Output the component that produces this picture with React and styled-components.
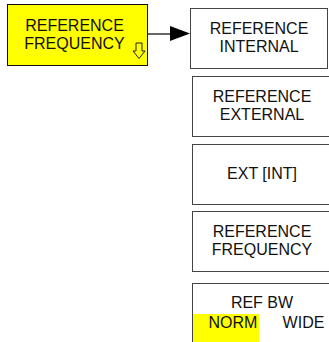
import React from 'react'
import styled, { createGlobalStyle } from 'styled-components'

const Global = createGlobalStyle`
  html, body {
    margin: 0;
    padding: 0;
    background: #fff;
    overflow: hidden;
  }
  body {
    font-family: "Liberation Sans", Arial, sans-serif;
    color: #111;
  }
`

const Page = styled.div`
  display: flex;
  align-items: flex-start;
  width: 329px;
  height: 342px;
  overflow: hidden;
  & > * {
    flex-shrink: 0;
  }
`

const MainKey = styled.div`
  position: relative;
  box-sizing: border-box;
  margin: 4px 0 0 7px;
  width: 141px;
  height: 62px;
  background: #ffff00;
  border: 1px solid #111;
  display: flex;
  flex-direction: column;
  justify-content: center;
  align-items: center;
  font-size: 16px;
  line-height: 18px;
  padding: 0 6px 0 0;
`

const DownArrow = styled.svg`
  position: absolute;
  right: 1px;
  bottom: 5px;
`

const Connector = styled.div`
  display: flex;
  align-items: center;
  margin-top: 26px;
  height: 15px;
`

const Line = styled.div`
  width: 22px;
  height: 2px;
  background: #666;
`

const Column = styled.div`
  display: flex;
  flex-direction: column;
`

const SoftKey = styled.div`
  box-sizing: border-box;
  flex-shrink: 0;
  width: ${p => p.$w || 140}px;
  height: 61px;
  margin-top: ${p => p.$top}px;
  margin-left: ${p => p.$left}px;
  border: 1px solid #444;
  display: flex;
  flex-direction: column;
  justify-content: ${p => (p.$split ? 'flex-start' : 'center')};
  align-items: center;
  font-size: 16px;
  line-height: 18px;
  padding-top: ${p => (p.$split ? '10px' : '0')};
  padding-bottom: ${p => (p.$split ? '0' : '2px')};
  text-align: center;
`

const Options = styled.div`
  align-self: stretch;
  display: flex;
  margin-top: 2px;
  height: 30px;
`

const Option = styled.div`
  width: ${p => p.$w}px;
  background: ${p => (p.$active ? '#ffff00' : 'transparent')};
  padding-left: ${p => p.$pad}px;
  box-sizing: border-box;
  line-height: 17px;
`

export default function App() {
  return (
    <Page>
      <Global />
      <MainKey>
        <div>REFERENCE</div>
        <div>FREQUENCY</div>
        <DownArrow width="14" height="18" viewBox="0 0 14 18">
          <path
            d="M4 1 H10 V9 H13 L7 16.5 L1 9 H4 Z"
            fill="#ffff00"
            stroke="#222"
            strokeWidth="1"
            strokeLinejoin="miter"
          />
        </DownArrow>
      </MainKey>
      <Connector>
        <Line />
        <svg width="20" height="15" viewBox="0 0 20 15">
          <path d="M0 0 L20 7.5 L0 15 Z" fill="#000" />
        </svg>
      </Connector>
      <Column>
        <SoftKey $top={8} $left={0} $w={138}>
          <div>REFERENCE</div>
          <div>INTERNAL</div>
        </SoftKey>
        <SoftKey $top={7} $left={2}>
          <div>REFERENCE</div>
          <div>EXTERNAL</div>
        </SoftKey>
        <SoftKey $top={7} $left={2}>
          <div>EXT [INT]</div>
        </SoftKey>
        <SoftKey $top={6} $left={2}>
          <div>REFERENCE</div>
          <div>FREQUENCY</div>
        </SoftKey>
        <SoftKey $top={11} $left={2} $split>
          <div>REF BW</div>
          <Options>
            <Option $active $w={66} $pad={14}>NORM</Option>
            <Option $w={72} $pad={17}>WIDE</Option>
          </Options>
        </SoftKey>
      </Column>
    </Page>
  )
}
